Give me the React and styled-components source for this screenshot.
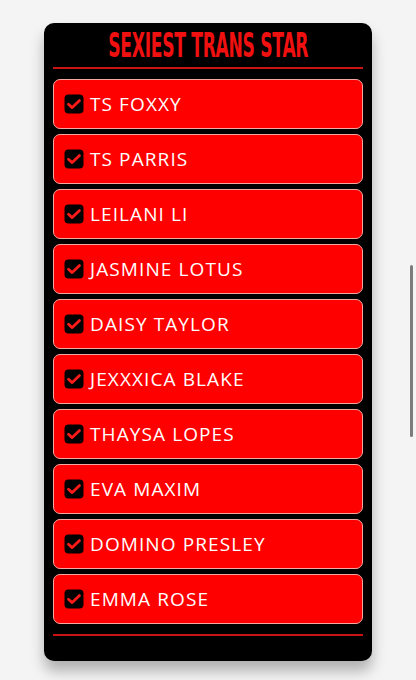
import React from 'react'
import styled, { createGlobalStyle } from 'styled-components'

const GlobalStyle = createGlobalStyle`
    html, body {
        margin: 0;
        padding: 0;
        background: #f4f4f4;
        font-family: "Open Sans", "Liberation Sans", sans-serif;
    }
`

const stars = [
    'TS FOXXY',
    'TS PARRIS',
    'LEILANI LI',
    'JASMINE LOTUS',
    'DAISY TAYLOR',
    'JEXXXICA BLAKE',
    'THAYSA LOPES',
    'EVA MAXIM',
    'DOMINO PRESLEY',
    'EMMA ROSE',
]

function CheckIcon() {
    return (
        <svg width="20" height="20" viewBox="0 0 20 20">
            <rect x="0.5" y="0.5" width="19" height="19" rx="4" fill="#000" />
            <path d="M4.5 10.2 L8.2 13.6 L15.5 6.6" fill="none" stroke="#ff1a1a" strokeWidth="2.8" strokeLinecap="round" strokeLinejoin="round" />
        </svg>
    )
}

function App() {
    return (
        <Page>
            <GlobalStyle />
            <Card>
                <TitleRow>
                    <Title>SEXIEST TRANS STAR</Title>
                </TitleRow>
                <Divider />
                <List>
                    {stars.map(name => (
                        <Item key={name}>
                            <CheckIcon />
                            <Name>{name}</Name>
                        </Item>
                    ))}
                </List>
                <Divider bottom />
            </Card>
            <Scrollbar />
        </Page>
    )
}

export default App

const Page = styled.div`
    width: 416px;
    height: 680px;
    padding: 23px 0 0 44px;
    box-sizing: border-box;
    overflow: hidden;
`

const Card = styled.div`
    width: 328px;
    height: 638px;
    box-sizing: border-box;
    background: #000;
    border-radius: 10px;
    padding: 5px 9px 0 9px;
    box-shadow: 0 10px 14px rgba(0, 0, 0, 0.28);
    display: flex;
    flex-direction: column;
`

const TitleRow = styled.div`
    height: 36px;
    display: flex;
    justify-content: center;
    align-items: center;
    overflow: visible;
`

const Title = styled.span`
    display: inline-block;
    font-family: "DejaVu Sans", sans-serif;
    font-weight: 700;
    font-size: 33px;
    line-height: 36px;
    color: #f01010;
    letter-spacing: -0.6px;
    transform: scaleX(0.52);
    white-space: nowrap;
`

const Divider = styled.div`
    height: 2px;
    background: #c91414;
    margin: ${props => props.bottom ? '10px 0 0' : '3px 0 10px'};
`

const List = styled.div`
    display: flex;
    flex-direction: column;
    gap: 5px;
`

const Item = styled.div`
    height: 50px;
    box-sizing: border-box;
    background: #ff0000;
    border: 1px solid #f3a7a0;
    border-radius: 7px;
    display: flex;
    align-items: center;
    padding: 0 0 0 10px;
    gap: 6px;
`

const Name = styled.span`
    color: #fff;
    font-family: "Open Sans", sans-serif;
    font-size: 19px;
    letter-spacing: 1.1px;
`

const Scrollbar = styled.div`
    position: fixed;
    left: 410px;
    top: 265px;
    width: 3px;
    height: 172px;
    background: #7c7c7c;
    border-radius: 2px;
`
